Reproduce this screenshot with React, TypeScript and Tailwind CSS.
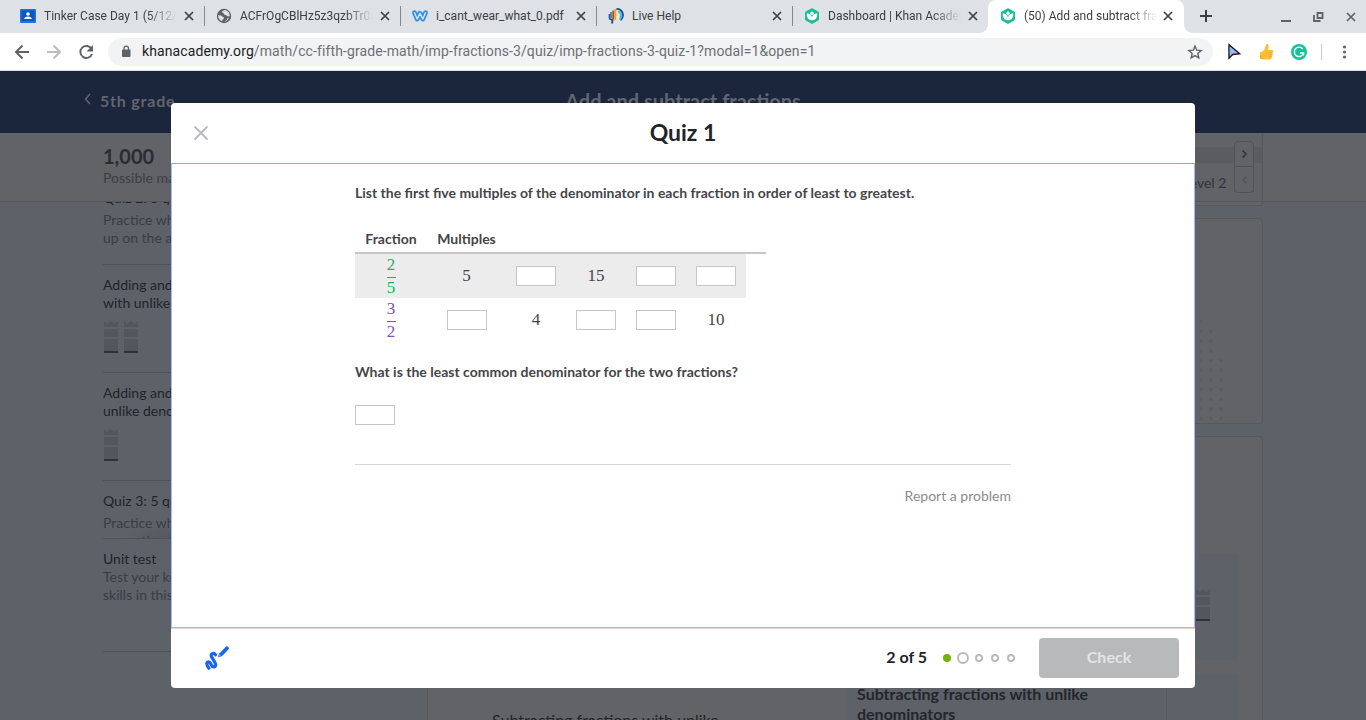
import React from "react";

type IconProps = { className?: string };

const CloseX = ({ className = "" }: IconProps) => (
  <svg className={className} width="10" height="10" viewBox="0 0 10 10" fill="none" stroke="currentColor" strokeWidth="1.7">
    <path d="M1 1l8 8M9 1l-8 8" />
  </svg>
);

const ClassroomIcon = () => (
  <svg width="16" height="16" viewBox="0 0 16 16">
    <rect y="1" width="16" height="14" rx="1" fill="#1a73e8" />
    <rect x="1.5" y="2.5" width="13" height="10.5" fill="#1257b8" />
    <circle cx="8" cy="6" r="1.8" fill="#fff" />
    <path d="M4.2 11c0-3.4 7.6-3.4 7.6 0z" fill="#fff" />
  </svg>
);

const GlobeIcon = () => (
  <svg width="16" height="16" viewBox="0 0 16 16">
    <circle cx="8" cy="8" r="7.2" fill="#5f6368" />
    <path d="M2 7.2l3.2.3 1.2 1.3 1.6.4-.3 1.6-1.4 1.1.3 1.4C3.600 12.500 2.100 10 2 7.200zM8.600 2.100c-.8.700-2.400.9-2.600 1.900.1 1 1.500.7 1.700 1.600.1.900 1.100 1.400 2.200 1.600 1.200.2 1.400 1.300 2.600 1.400l1.200-.5C13.800 5 11.800 2.500 8.600 2.100zM11.800 10l-1.600 2.600-2 .900c2 .2 3.800-1.400 4.600-3.200z" fill="#dee1e6" />
  </svg>
);

const WeeblyIcon = () => (
  <svg width="16" height="16" viewBox="0 0 16 16" fill="none" strokeLinecap="round" strokeLinejoin="round">
    <path d="M2.500 4.800l2.700 6.200L8 5.300l2.800 5.700L13.500 4.800" stroke="#2990ea" strokeWidth="4.800" />
    <path d="M2.500 4.800l2.700 6.200L8 5.300l2.800 5.700L13.500 4.800" stroke="#dee1e6" strokeWidth="1.500" />
  </svg>
);

const LiveHelpIcon = () => (
  <svg width="16" height="16" viewBox="0 0 16 16" fill="none">
    <path d="M3 4v6M1.300 6v4" stroke="#1d6fa8" strokeWidth="1.500" />
    <path d="M5.300 2.500v9" stroke="#c8412f" strokeWidth="2" />
    <path d="M7.500 1v11" stroke="#f2a32c" strokeWidth="2.200" />
    <path d="M9.500 3v9" stroke="#fff0b8" strokeWidth="2" />
    <path d="M8.500.8c7 .2 8 8 4 11.500" stroke="#155a91" strokeWidth="2" />
    <path d="M10 3.500c3.500.5 3.500 5 1.800 8.500" stroke="#54b5df" strokeWidth="1.800" />
    <path d="M1 10.500l3.500 1.500-.5 3.500" stroke="#174f7d" strokeWidth="1.800" />
  </svg>
);

const KhanIcon = () => (
  <svg width="16" height="16" viewBox="0 0 16 16">
    <path d="M7.200.400a1.600 1.600 0 0 1 1.600 0l5.400 3.100a1.600 1.600 0 0 1 .8 1.400v6.200a1.600 1.600 0 0 1-.8 1.400l-5.400 3.100a1.600 1.600 0 0 1-1.600 0l-5.400-3.100A1.600 1.600 0 0 1 1 11.100V4.900a1.600 1.600 0 0 1 .8-1.400z" fill="#14bf96" />
    <circle cx="8" cy="5.200" r="1.700" fill="#fff" />
    <path d="M2.800 5.200c3 .3 4.700 2 5.200 4 .5-2 2.200-3.700 5.200-4 .3 4.400-1.700 7-5.200 7s-5.500-2.600-5.200-7z" fill="#fff" />
  </svg>
);

const faded = "[mask-image:linear-gradient(to_right,black_104px,transparent_133px)]";

const tabs = [
  { title: "Tinker Case Day 1 (5/12/20)", icon: <ClassroomIcon />, line: true, mask: faded },
  { title: "ACFrOgCBlHz5z3qzbTr0aW", icon: <GlobeIcon />, line: true, mask: faded },
  { title: "i_cant_wear_what_0.pdf", icon: <WeeblyIcon />, line: true, mask: "" },
  { title: "Live Help", icon: <LiveHelpIcon />, line: true, mask: "" },
  { title: "Dashboard | Khan Academy", icon: <KhanIcon />, line: false, mask: faded },
];

const label = "ml-2 -mt-px w-[133px] overflow-hidden whitespace-nowrap text-[12px] ";

function TabStrip() {
  return (
    <div className="flex h-[33px] bg-[#dee1e6] pl-[9px] text-[#3c4043]">
      {tabs.map((t) => (
        <div key={t.title} className="flex w-[196px] shrink-0 items-center pb-px pl-[11px]">
          {t.icon}
          <span className={label + t.mask}>{t.title}</span>
          <CloseX className="ml-[7px]" />
          {t.line && <span className="ml-auto h-5 w-px bg-[#85888d]" />}
        </div>
      ))}
      <div className="relative -ml-px flex w-[196px] shrink-0 items-center rounded-t-lg bg-white pb-px pl-3">
        <span className="absolute bottom-0 -left-2 h-2 w-2 bg-[radial-gradient(circle_at_0_0,#dee1e6_7.500px,white_8px)]" />
        <span className="absolute -right-2 bottom-0 h-2 w-2 bg-[radial-gradient(circle_at_100%_0,#dee1e6_7.500px,white_8px)]" />
        <KhanIcon />
        <span className={label + faded}>(50) Add and subtract fractions</span>
        <CloseX className="ml-[6px]" />
      </div>
      <div className="flex flex-1 items-center pb-px pl-4">
        <svg width="12" height="12" viewBox="0 0 12 12" stroke="#3c4043" strokeWidth="2"><path d="M6 0v12M0 6h12" /></svg>
        <svg className="ml-[69px]" width="10" height="12" viewBox="0 0 10 12"><path d="M0 10h10v2H0z" fill="#5f6368" /></svg>
        <svg className="ml-[22px]" width="11" height="12" viewBox="0 0 11 12" fill="none" stroke="#5f6368" strokeWidth="1.800"><path d="M4.500 3h5v5h-5zM1 5v6h6.500" /></svg>
        <CloseX className="mt-px ml-[22px] text-[#5f6368]" />
      </div>
    </div>
  );
}

function Toolbar() {
  return (
    <div className="flex h-[37px] items-center bg-white pl-[14px]">
      <svg width="16" height="16" viewBox="0 0 16 16" fill="none" stroke="#5f6368" strokeWidth="2"><path d="M15 8H2.500M8.500 1.500L2 8l6.500 6.500" /></svg>
      <svg className="ml-4" width="16" height="16" viewBox="0 0 16 16" fill="none" stroke="#babcbe" strokeWidth="2"><path d="M1 8h12.500M7.500 1.500L14 8l-6.500 6.500" /></svg>
      <svg className="ml-4" width="16" height="16" viewBox="0 0 16 16"><path d="M13.500 4.800A6 6 0 1 0 14 10" fill="none" stroke="#5f6368" strokeWidth="2" /><path d="M15 1v6.500H8.500z" fill="#5f6368" /></svg>
      <div className="ml-[14px] flex h-7 w-[1105px] items-center rounded-full bg-[#f1f3f4] pl-[13px]">
        <svg width="10" height="13" viewBox="0 0 10 13"><rect x="1" y="4.500" width="8.500" height="7.500" rx="1" fill="#5f6368" /><path d="M3 5V3.300a2.250 2.250 0 0 1 4.500 0V5" fill="none" stroke="#5f6368" strokeWidth="1.300" /></svg>
        <span className="ml-[11px] text-[14px] tracking-[0.1px] whitespace-nowrap text-[#6d7074]">
          <span className="text-[#202124]">khanacademy.org</span>/math/cc-fifth-grade-math/imp-fractions-3/quiz/imp-fractions-3-quiz-1?modal=1&amp;open=1
        </span>
        <svg className="mr-[10px] ml-auto" width="16" height="16" viewBox="0 0 16 16" fill="none" stroke="#5f6368" strokeWidth="1.400"><path d="M8 2l1.700 4.200 4.500.4-3.400 2.900 1 4.400L8 11.600l-3.800 2.300 1-4.400-3.400-2.900 4.500-.4z" /></svg>
      </div>
      <svg className="ml-[14px]" width="16" height="18" viewBox="0 0 16 18">
        <path d="M2 1.800v13.400l3.800-3.700 6.900-.8z" fill="#c7a0ef" stroke="#18182a" strokeWidth="1.400" />
        <path d="M2.800 4v6.500l4-3z" fill="#64d3f5" />
      </svg>
      <svg className="ml-[16px]" width="15" height="18" viewBox="0 0 15 18">
        <path d="M1 9.500l4-2 1.800-5.300c.5-1.800 2.800-1.200 2.700.7L9.200 7H13c1.500.2 1.400 1.900.5 2.200.900.7.6 1.900-.2 2.200.7.8.2 1.800-.5 2 .4 1.800-.6 3-2.200 3H5L1 14.800z" fill="#fbc02f" />
        <path d="M1 12v3.500l5 1c-2.500-.8-3.800-2.200-5-4.500z" fill="#efa32a" />
        <path d="M9.500 9.300H13M9.500 11.500H13M9.500 13.500h3" stroke="#e6a023" strokeWidth=".6" />
      </svg>
      <svg className="ml-[17px]" width="16" height="16" viewBox="0 0 16 16" fill="none">
        <circle cx="8" cy="8" r="8" fill="#15c39a" />
        <path d="M11.800 5A4.700 4.700 0 1 0 12.600 9H9" stroke="#fff" strokeWidth="1.400" />
        <path d="M12.600 11.500V9" stroke="#fff" strokeWidth="1.200" />
      </svg>
      <span className="ml-[14px] h-4 w-px bg-[#c6c8ca]" />
      <svg className="ml-[20px]" width="5" height="14" viewBox="0 0 5 14" fill="#5f6368"><circle cx="2.500" cy="2" r="1.600" /><circle cx="2.500" cy="7" r="1.600" /><circle cx="2.500" cy="12" r="1.600" /></svg>
    </div>
  );
}

const Crown = () => (
  <svg width="14" height="32" viewBox="0 0 14 32" className="shrink-0">
    <path d="M0 0l3.500 3L7 0l3.500 3L14 0v6H0zM0 8h14v8H0zM0 18h14v12H0z" fill="#53565c" />
    <path d="M0 30h14v2H0z" fill="#2e3138" />
  </svg>
);

function Sidebar() {
  return (
    <aside className="w-[427px] shrink-0 overflow-hidden pl-[103px] text-[14px] leading-[18px] whitespace-nowrap text-[#3a3d44]">
      <div className="-mt-[13px] h-[76px] border-b border-[#4f5258]">
        <div className="text-[#21242c]">Quiz 2: 5 questions</div>
        <div className="mt-1">Practice what you’ve learned, and level</div>
        <div>up on the above skills</div>
      </div>
      <div className="h-[108px] border-b border-[#4f5258] pt-[11px] text-[#21242c]">
        <div>Adding and subtracting fractions</div>
        <div>with unlike denominators</div>
        <div className="mt-[9px] flex gap-[6px] pl-px"><Crown /><Crown /></div>
      </div>
      <div className="h-[108px] border-b border-[#4f5258] pt-[11px] text-[#21242c]">
        <div>Adding and subtracting with</div>
        <div>unlike denominators word problems</div>
        <div className="mt-[9px] flex pl-px"><Crown /></div>
      </div>
      <div className="h-[58px] overflow-hidden border-b border-[#4f5258] bg-[radial-gradient(ellipse_70px_14px_at_90px_100%,#505357,transparent)] pt-[11px]">
        <div className="text-[#21242c]">Quiz 3: 5 questions</div>
        <div className="mt-1">Practice what you’ve learned, and level</div>
        <div>up on the above skills</div>
      </div>
      <div className="h-[113px] border-b border-[#4f5258] pt-[11px]">
        <div className="text-[#21242c]">Unit test</div>
        <div>Test your knowledge of all</div>
        <div>skills in this unit</div>
      </div>
    </aside>
  );
}

const dotRows = [0, 1, 2, 2, 2, 3, 3, 3, 3, 3, 3, 3];

function Page() {
  return (
    <div className="flex h-full flex-col overflow-hidden bg-[#5d6168] font-[Lato,sans-serif]">
      <header className="flex h-[62px] shrink-0 items-center bg-[#1b253c] pb-[2px] text-[#62656d]">
        <div className="flex w-[400px] items-center pl-[84px]">
          <svg className="-mt-[4px]" width="7" height="12" viewBox="0 0 7 12" fill="none" stroke="currentColor" strokeWidth="1.500"><path d="M6 1L1.500 6 6 11" /></svg>
          <span className="ml-[9px] text-[16px] font-bold tracking-[0.8px]">5th grade</span>
        </div>
        <div className="flex-1 pr-[400px] text-center text-[20px] leading-[26px] font-bold whitespace-nowrap">Add and subtract fractions</div>
      </header>
      <div className="flex h-[69px] shrink-0 border-b border-[#54565a] bg-[#626366]">
        <div className="flex-1 pt-[10px] pl-[103px]">
          <div className="text-[20px] leading-[26px] font-bold text-[#2a2c31]">1,000</div>
          <div className="text-[14px] leading-[17px] text-[#3c3e44]">Possible mastery points</div>
        </div>
        <div className="flex w-[80px] flex-col border-r border-[#56585c] pt-[14px]">
          <div className="h-4 bg-[#5a5c60]" />
          <div className="pt-[11px] text-[14px] leading-[18px] text-[#30333d]">Level 2</div>
        </div>
        <div className="-ml-[29px] flex w-[20px] flex-col pt-2">
          <div className="flex h-[26px] items-center justify-center rounded-t border border-[#505256] bg-[#626366]"><svg width="7" height="8" viewBox="0 0 7 8" fill="none" stroke="#35373c" strokeWidth="1.700"><path d="M1.500 .5L5 4 1.500 7.500" /></svg></div>
          <div className="flex h-[26px] items-center justify-center rounded-b border border-t-0 border-[#505256]"><svg width="7" height="8" viewBox="0 0 7 8" fill="none" stroke="#505256" strokeWidth="1.400"><path d="M5.500 .5L2 4l3.500 3.500" /></svg></div>
        </div>
        <div className="w-[112px]" />
      </div>
      <div className="flex min-h-0 flex-1">
        <Sidebar />
        <main className="flex w-[836px] shrink-0 flex-col">
          <div className="h-1 shrink-0 rounded-b border border-t-0 border-[#56585c] bg-[#626366]" />
          <div className="mt-3 flex h-[206px] shrink-0 justify-end rounded border border-[#56585c] bg-[#626366] pt-[86px] pr-[24px]">
            <svg width="40" height="120" viewBox="0 0 40 120" fill="#5b5d61">
              {dotRows.map((n, r) => Array.from({ length: n }, (_, c) => <circle key={r + "-" + c} cx={3 + c * 10} cy={7 + r * 9.7} r="1.600" />))}
            </svg>
          </div>
          <div className="mt-3 flex h-[400px] shrink-0 flex-col rounded border border-[#56585c] bg-[#626366] pt-[116px] pr-[24px] pl-[418px]">
            <div className="flex h-[107px] shrink-0 items-start justify-end rounded bg-[#5d6168] pt-[36px] pr-[28px]"><Crown /></div>
            <div className="mt-[14px] flex flex-1 rounded bg-[#5d6168]">
              <div className="relative w-[321px] border-r border-[#565a60] pt-[10px] pl-[11px] text-[16px] leading-5 font-bold text-[#24262c]">
                Subtracting fractions with unlike denominators
                <span className="absolute top-[36px] -left-[354px] font-normal whitespace-nowrap">Subtracting fractions with unlike</span>
              </div>
            </div>
          </div>
        </main>
      </div>
    </div>
  );
}

const Blank = () => <input aria-label="Answer" className="block h-5 w-10 border border-[#c6c6c6] bg-white px-1 text-xs outline-none" />;

const Fraction = ({ n, d, className }: { n: number; d: number; className: string }) => (
  <div className={"flex flex-col items-center leading-[22px] " + className}>
    <span className="h-[23px]">{n}</span>
    <span className="h-px w-[9px] bg-current" />
    <span className="h-5 leading-5">{d}</span>
  </div>
);

const rows = [
  { n: 2, d: 5, color: "text-[#28ae5e]", bg: "bg-[#ececec]", cells: ["5", "", "15", "", ""] },
  { n: 3, d: 2, color: "text-[#7b54b3]", bg: "", cells: ["", "4", "", "", "10"] },
];

const cols = "grid grid-cols-[72px_79px_60px_60px_60px_60px]";

function QuizModal() {
  return (
    <div className="flex h-[585px] w-[1024px] flex-col overflow-hidden rounded-[4px] bg-white font-[Lato,sans-serif] text-[#21242c]">
      <div className="relative flex h-[60px] shrink-0 items-center justify-center pb-[2px]">
        <svg className="absolute top-[23px] left-[23px]" width="14" height="14" viewBox="0 0 14 14" stroke="#b8babd" strokeWidth="1.800" strokeLinecap="round"><path d="M1 1l12 12M13 1L1 13" /></svg>
        <h1 className="text-[23px] font-bold">Quiz 1</h1>
      </div>
      <div className="h-[465px] shrink-0 border border-[#a0bcf5] border-t-[#8ea6d6] px-[183px] pt-5 text-[14px] text-[#444549]">
        <p className="leading-[18px] font-bold whitespace-nowrap">List the first five multiples of the denominator in each fraction in order of least to greatest.</p>
        <div className="mt-7 w-[411px]">
          <div className={cols + " h-[24px] border-b-2 border-[#c6c6c6] leading-[18px] font-bold"}>
            <span className="text-center">Fraction</span>
            <span className="text-center">Multiples</span>
          </div>
          {rows.map((r) => (
            <div key={r.n} className={cols + " h-11 w-[391px] font-['Liberation_Serif',serif] text-[17px] " + r.bg}>
              <Fraction n={r.n} d={r.d} className={r.color} />
              {r.cells.map((c, i) => (
                <div key={i} className="flex items-center justify-center">{c ? <span>{c}</span> : <Blank />}</div>
              ))}
            </div>
          ))}
        </div>
        <p className="mt-[21px] mb-[24px] leading-[18px] font-bold">What is the least common denominator for the two fractions?</p>
        <Blank />
        <div className="mt-[39px] border-t border-[#d6d6d8] pt-[22px] text-right leading-[18px] text-[#898b90]">Report a problem</div>
      </div>
      <div className="flex h-[60px] shrink-0 items-center border-t border-[#d5d6d8] pr-4 pb-[2px] pl-[33px]">
        <svg width="26" height="26" viewBox="0 0 26 26" fill="none" stroke="#1865f2" strokeLinecap="round" strokeLinejoin="round">
          <path d="M11.500 9.800c-1.500-2.500-5.500-1-4 2 1 2 4 5.500 4.200 8 0 2.500-3 3-4.200.5C6.500 18.500 6 16.500 4 17c-2.200.600-.8 4 .9 6.300" strokeWidth="3.200" />
          <path d="M17.500 9l5.500-5.700" strokeWidth="3.800" />
          <path d="M15.500 8.600l-.9 3 3-.9" strokeWidth="1" />
        </svg>
        <span className="mb-[2px] ml-auto text-[16px] font-bold">2 of 5</span>
        <div className="ml-4 flex items-center gap-2">
          <span className="h-2 w-2 rounded-full bg-[#71b307]" />
          <span className="-mx-[2px] h-3 w-3 rounded-full border-2 border-[#b8babd]" />
          <span className="h-2 w-2 rounded-full border-2 border-[#b8babd]" />
          <span className="h-2 w-2 rounded-full border-2 border-[#b8babd]" />
          <span className="h-2 w-2 rounded-full border-2 border-[#b8babd]" />
        </div>
        <button className="ml-6 h-10 w-[140px] rounded-[4px] bg-[#b7b9bb] pb-[2px] text-[16px] font-bold text-[#e3e4e5]">Check</button>
      </div>
    </div>
  );
}

export default function App() {
  return (
    <div className="flex h-[720px] w-[1366px] flex-col overflow-hidden font-[Roboto,sans-serif]">
      <TabStrip />
      <Toolbar />
      <div className="relative min-h-0 flex-1 border-t border-[#dcdfe0]">
        <Page />
        <div className="absolute inset-0 flex items-start justify-center pt-8">
          <QuizModal />
        </div>
      </div>
    </div>
  );
}
